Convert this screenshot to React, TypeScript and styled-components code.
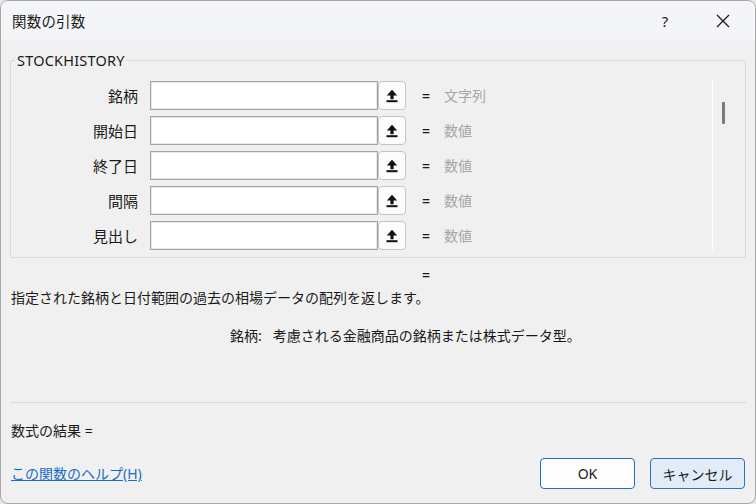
import React from "react";
import styled, { createGlobalStyle } from "styled-components";

const GlobalStyle = createGlobalStyle`
  html, body {
    margin: 0;
    padding: 0;
    background: #e6e6e6;
  }
  * {
    box-sizing: border-box;
  }
`;

const FONT = `"Noto Sans", "Noto Sans CJK JP", sans-serif`;

const Window = styled.div`
  width: 756px;
  height: 504px;
  display: flex;
  flex-direction: column;
  background: #f0f0f0;
  border: 1px solid #a8a8a8;
  border-radius: 8px;
  overflow: hidden;
  font-family: ${FONT};
  color: #1a1a1a;
`;

const TitleBar = styled.div`
  height: 39px;
  flex: none;
  display: flex;
  align-items: center;
  padding-left: 11px;
  padding-right: 3px;
  background: #f4f5f8;
`;

const Title = styled.div`
  flex: 1;
  font-size: 14.5px;
  line-height: 18px;
  letter-spacing: 0.2px;
`;

const TitleButton = styled.div`
  width: 58px;
  height: 39px;
  display: flex;
  align-items: center;
  justify-content: center;
  font-size: 15px;
`;

const Content = styled.div`
  flex: 1;
  display: flex;
  flex-direction: column;
  padding: 0 9px;
`;

const Group = styled.fieldset`
  margin: 11px 0 0 0;
  padding: 12px 0 7px 0;
  border: 1px solid #d9d9d9;
  border-radius: 2px;
  display: flex;
`;

const Legend = styled.legend`
  margin-left: 4px;
  padding: 0 2px;
  font-size: 14.5px;
  line-height: 18px;
  letter-spacing: 0.2px;
`;

const Rows = styled.div`
  display: flex;
  flex-direction: column;
  gap: 6px;
  width: 701px;
`;

const Row = styled.div`
  display: flex;
  align-items: center;
  height: 29px;
`;

const ArgLabel = styled.div`
  width: 139px;
  padding-right: 12px;
  text-align: right;
  font-size: 15px;
  line-height: 20px;
`;

const ArgInput = styled.div`
  width: 228px;
  height: 29px;
  background: #fff;
  border: 1px solid #a3a3a3;
  box-shadow: inset 0 0 0 1px #e8e8e8;
`;

const RefButton = styled.div`
  width: 28px;
  height: 29px;
  display: flex;
  align-items: center;
  justify-content: center;
  background: #fcfcfc;
  border: 1px solid #c4c4c4;
  border-radius: 4px;
`;

const Equals = styled.div<{ $indent?: number }>`
  margin-left: ${(p) => p.$indent ?? 14}px;
  width: 12px;
  text-align: center;
  font-size: 14px;
  line-height: 18px;
  font-weight: 600;
`;

const ArgValue = styled.div`
  margin-left: 12px;
  font-size: 14px;
  line-height: 20px;
  color: #a6a6a6;
`;

const ScrollTrack = styled.div`
  margin-top: -1px;
  width: 33px;
  border-left: 1px solid #ffffff;
  padding: 22px 0 0 9px;
`;

const ScrollThumb = styled.div`
  width: 3px;
  height: 22px;
  background: #7a7a7a;
  border-radius: 1px;
`;

const TextLine = styled.div<{ $top: number; $indent?: number }>`
  margin-top: ${(p) => p.$top}px;
  padding-left: ${(p) => p.$indent ?? 1}px;
  font-size: 14px;
  line-height: 20px;
  white-space: pre;
`;

const Separator = styled.div`
  margin-top: 56px;
  height: 1px;
  background: #dadada;
`;

const Footer = styled.div`
  margin-top: 17px;
  display: flex;
  align-items: center;
  gap: 15px;
  padding-left: 1px;
  padding-right: 1px;
`;

const HelpLink = styled.a`
  font-size: 14px;
  line-height: 20px;
  color: #1a6dc6;
  text-decoration: underline;
  margin-right: auto;
`;

const DialogButton = styled.button<{ $active?: boolean }>`
  width: 95px;
  height: 31px;
  font-family: ${FONT};
  font-size: 14px;
  color: #1a1a1a;
  background: ${(p) => (p.$active ? "#e1ecf8" : "#fdfdfd")};
  border: 1px solid ${(p) => (p.$active ? "#2a74bb" : "#1f6fc0")};
  border-radius: 4px;
  padding: 0;
`;

const RefIcon = () => (
  <svg width="12" height="14" viewBox="0 0 12 14">
    <path d="M6 0.8 L11.2 6.6 H7.6 V10.2 H4.4 V6.6 H0.8 Z" fill="#111" />
    <rect x="0.5" y="11.2" width="11" height="2" fill="#111" />
  </svg>
);

const CloseIcon = () => (
  <svg width="14" height="14" viewBox="0 0 14 14">
    <path d="M1 1 L13 13 M13 1 L1 13" stroke="#1a1a1a" strokeWidth="1.3" />
  </svg>
);

const args = [
  { name: "銘柄", type: "文字列" },
  { name: "開始日", type: "数値" },
  { name: "終了日", type: "数値" },
  { name: "間隔", type: "数値" },
  { name: "見出し", type: "数値" },
];

export default function App() {
  return (
    <>
      <GlobalStyle />
      <Window>
        <TitleBar>
          <Title>関数の引数</Title>
          <TitleButton>?</TitleButton>
          <TitleButton>
            <CloseIcon />
          </TitleButton>
        </TitleBar>
        <Content>
          <Group>
            <Legend>STOCKHISTORY</Legend>
            <Rows>
              {args.map((a) => (
                <Row key={a.name}>
                  <ArgLabel>{a.name}</ArgLabel>
                  <ArgInput />
                  <RefButton>
                    <RefIcon />
                  </RefButton>
                  <Equals>=</Equals>
                  <ArgValue>{a.type}</ArgValue>
                </Row>
              ))}
            </Rows>
            <ScrollTrack>
              <ScrollThumb />
            </ScrollTrack>
          </Group>
          <Row style={{ height: 18, marginTop: 8 }}>
            <Equals $indent={410}>=</Equals>
          </Row>
          <TextLine $top={4}>指定された銘柄と日付範囲の過去の相場データの配列を返します。</TextLine>
          <TextLine $top={18} $indent={220}>
            {"銘柄:   考慮される金融商品の銘柄または株式データ型。"}
          </TextLine>
          <Separator />
          <TextLine $top={18}>数式の結果 =</TextLine>
          <Footer>
            <HelpLink href="#">この関数のヘルプ(H)</HelpLink>
            <DialogButton>OK</DialogButton>
            <DialogButton $active>キャンセル</DialogButton>
          </Footer>
        </Content>
      </Window>
    </>
  );
}
